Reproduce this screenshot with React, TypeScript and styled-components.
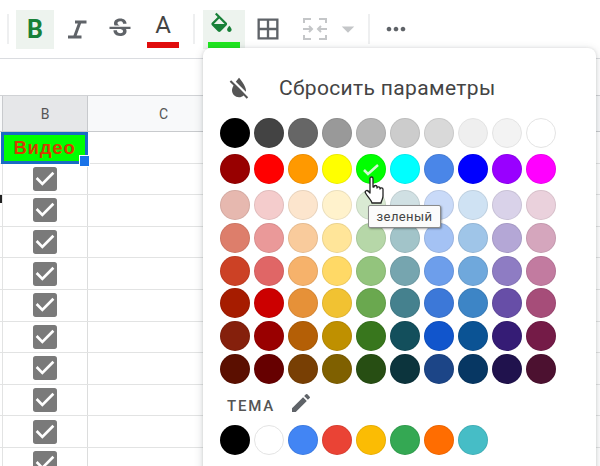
import React from "react";
import styled, { createGlobalStyle } from "styled-components";
import {
  MdStrikethroughS,
  MdBorderAll,
  MdFormatColorReset,
  MdEdit,
  MdCheckBox,
  MdMoreHoriz,
  MdArrowDropDown,
} from "react-icons/md";

const Global = createGlobalStyle`
  html, body { margin: 0; padding: 0; background: #fff; }
  body { font-family: Roboto, "Liberation Sans", sans-serif; }
`;

const Page = styled.div`
  position: relative;
  width: 600px;
  height: 466px;
  overflow: hidden;
  background: #fff;
`;

const Toolbar = styled.div`
  display: flex;
  align-items: center;
  height: 58px;
  padding-left: 7px;
  box-sizing: content-box;
  border-bottom: 1px solid #dadce0;
`;

const Separator = styled.div<{ $ml?: number }>`
  width: 2px;
  height: 30px;
  margin-left: ${(p) => p.$ml ?? 0}px;
  background: #eeeff0;
`;

const ToolButton = styled.div<{ $w?: number; $ml?: number; $active?: boolean; $color?: string }>`
  display: flex;
  align-items: center;
  justify-content: center;
  flex-direction: column;
  width: ${(p) => p.$w ?? 38}px;
  height: 39px;
  margin-left: ${(p) => p.$ml ?? 0}px;
  background: ${(p) => (p.$active ? "#edf3ee" : "transparent")};
  color: ${(p) => p.$color ?? "#5f6368"};
`;

const BoldLetter = styled.span`
  font: 700 25px Roboto, sans-serif;
  color: #188038;
`;

const ColorStack = styled.div`
  display: flex;
  flex-direction: column;
  align-items: center;
  justify-content: flex-end;
  height: 39px;
  padding-bottom: 1px;
  box-sizing: border-box;
`;

const ALetter = styled.span`
  font: 400 24px/28px Roboto, sans-serif;
  color: #444;
  margin-bottom: 3px;
`;

const ColorBar = styled.div<{ $color: string; $mt?: number }>`
  width: 32px;
  height: 6px;
  margin-top: ${(p) => p.$mt ?? 0}px;
  background: ${(p) => p.$color};
`;

const FillSvg = styled.svg`
  margin-left: -5px;
`;

const FormulaGap = styled.div`
  height: 36px;
  border-bottom: 1px solid #d0d2d5;
`;

const HeaderRow = styled.div`
  display: flex;
  height: 36px;
  border-bottom: 1px solid #c8cacd;
  box-sizing: border-box;
  background: #f8f9fa;
`;

const Gutter = styled.div`
  width: 2px;
  flex: none;
  border-right: 1px solid #c8cacd;
`;

const HeaderCell = styled.div<{ $w?: number; $selected?: boolean }>`
  display: flex;
  align-items: center;
  justify-content: center;
  width: ${(p) => p.$w ?? 152}px;
  flex: none;
  box-sizing: border-box;
  border-right: 1px solid #c8cacd;
  background: ${(p) => (p.$selected ? "#e6e7e9" : "#f8f9fa")};
  font: 400 14px Roboto, sans-serif;
  color: #555;
`;

const Row = styled.div`
  display: flex;
  height: 31.6px;
  box-sizing: border-box;
  border-bottom: 1px solid #e2e3e3;
`;

const CellB = styled.div`
  display: flex;
  align-items: center;
  justify-content: center;
  width: 86px;
  margin-left: 2px;
  flex: none;
  box-sizing: border-box;
  border-left: 1px solid #e2e3e3;
  border-right: 1px solid #dcdddd;
`;

const SelectedCell = styled.div`
  position: relative;
  display: flex;
  align-items: center;
  justify-content: center;
  width: 87px;
  height: 32px;
  margin-left: 1px;
  box-sizing: border-box;
  border: 3px solid #1a6cc4;
  background: #00ff00;
  font: 700 18.5px "Liberation Sans", sans-serif;
  letter-spacing: 0.8px;
  color: #d43c00;
`;

const FillHandle = styled.div`
  position: absolute;
  right: -5px;
  bottom: -6px;
  width: 11px;
  height: 12px;
  box-sizing: border-box;
  border: 1px solid #fff;
  background: #1a73e8;
`;

const EdgeMark = styled.div`
  position: absolute;
  left: 0;
  top: 195px;
  width: 2px;
  height: 8px;
  background: #222;
`;

const Menu = styled.div`
  position: absolute;
  left: 203px;
  top: 48px;
  width: 393px;
  height: 440px;
  padding: 22px 0 0 17px;
  box-sizing: border-box;
  background: #fff;
  border-radius: 8px;
  box-shadow: 0 2px 8px rgba(60, 64, 67, 0.22), 0 0 3px rgba(60, 64, 67, 0.12);
`;

const ResetRow = styled.div`
  display: flex;
  align-items: center;
  height: 36px;
  margin-bottom: 12px;
  padding-left: 5px;
  font: 400 21px Roboto, sans-serif;
  letter-spacing: 0.35px;
  color: #444;
`;

const ResetIcon = styled.div`
  display: flex;
  width: 54px;
  flex: none;
  color: #555;
`;

const Swatches = styled.div<{ $mb?: number }>`
  display: flex;
  gap: 4px;
  margin-bottom: ${(p) => p.$mb ?? 2.8}px;
`;

const Swatch = styled.div<{ $color: string }>`
  position: relative;
  width: 30px;
  height: 30px;
  flex: none;
  box-sizing: border-box;
  border-radius: 50%;
  background: ${(p) => p.$color};
  border: 1px solid ${(p) => (p.$color === "#ffffff" || p.$color === "#f3f3f3" || p.$color === "#efefef" ? "#e4e4e4" : "rgba(0,0,0,0.08)")};
`;

const SwatchCheck = styled.svg`
  position: absolute;
  left: 6px;
  top: 9px;
`;

const ThemeLabelRow = styled.div`
  display: flex;
  align-items: center;
  height: 38px;
  padding-left: 7px;
  gap: 14px;
  font: 500 15px Roboto, sans-serif;
  letter-spacing: 1.8px;
  color: #555;
`;

const PencilWrap = styled.span`
  display: flex;
  margin-top: -5px;
  color: #5f6368;
`;

const Tooltip = styled.div`
  position: absolute;
  left: 368px;
  top: 205px;
  width: 73px;
  height: 23px;
  display: flex;
  align-items: center;
  justify-content: center;
  box-sizing: border-box;
  background: #fbfbfb;
  border: 1px solid #8a8a8a;
  border-radius: 2px;
  box-shadow: 1px 1px 2px rgba(0, 0, 0, 0.35);
  font: 400 13px Roboto, sans-serif;
  letter-spacing: 0.4px;
  color: #444;
`;

const HandCursor = styled.svg`
  position: absolute;
  left: 364px;
  top: 176px;
`;

const STANDARD = [
  ["#000000", "#434343", "#666666", "#999999", "#b7b7b7", "#cccccc", "#d9d9d9", "#efefef", "#f3f3f3", "#ffffff"],
  ["#980000", "#ff0000", "#ff9900", "#ffff00", "#00ff00", "#00ffff", "#4a86e8", "#0000ff", "#9900ff", "#ff00ff"],
  ["#e6b8af", "#f4cccc", "#fce5cd", "#fff2cc", "#d9ead3", "#d0e0e3", "#c9daf8", "#cfe2f3", "#d9d2e9", "#ead1dc"],
  ["#dd7e6b", "#ea9999", "#f9cb9c", "#ffe599", "#b6d7a8", "#a2c4c9", "#a4c2f4", "#9fc5e8", "#b4a7d6", "#d5a6bd"],
  ["#cc4125", "#e06666", "#f6b26b", "#ffd966", "#93c47d", "#76a5af", "#6d9eeb", "#6fa8dc", "#8e7cc3", "#c27ba0"],
  ["#a61c00", "#cc0000", "#e69138", "#f1c232", "#6aa84f", "#45818e", "#3c78d8", "#3d85c6", "#674ea7", "#a64d79"],
  ["#85200c", "#990000", "#b45f06", "#bf9000", "#38761d", "#134f5c", "#1155cc", "#0b5394", "#351c75", "#741b47"],
  ["#5b0f00", "#660000", "#783f04", "#7f6000", "#274e13", "#0c343d", "#1c4587", "#073763", "#20124d", "#4c1130"],
];
const THEME = ["#000000", "#ffffff", "#4285f4", "#ea4335", "#fbbc04", "#34a853", "#ff6d01", "#46bdc6"];

const FillIcon = () => (
  <FillSvg width="27" height="24" viewBox="0 0 24 20" fill="#188038">
    <path d="M16.56 8.94L7.62 0 6.21 1.41l2.38 2.38-5.15 5.15c-.59.59-.59 1.54 0 2.12l5.5 5.5c.29.29.68.44 1.06.44s.77-.15 1.06-.44l5.5-5.5c.59-.58.59-1.53 0-2.12zM5.21 10L10 5.21 14.79 10H5.21zM19 11.5s-2 2.17-2 3.5c0 1.1.9 2 2 2s2-.9 2-2c0-1.33-2-3.5-2-3.5z" />
  </FillSvg>
);

const ItalicIcon = () => (
  <svg width="20" height="19" viewBox="0 0 20 19" fill="none" stroke="#5f6368" strokeWidth="3">
    <path d="M8 2h11.500M1 17h13.500M13 2L7.500 17" />
  </svg>
);

const MergeIcon = () => (
  <svg width="26" height="24" viewBox="0 0 26 24" fill="none" stroke="#c4c6c8" strokeWidth="2">
    <path d="M2 6V2h7M17 2h7v4M2 18v4h7M17 22h7v-4" />
    <path d="M1 12h9M7 9l3 3-3 3M25 12h-9M19 9l-3 3 3 3" />
  </svg>
);

export default function App() {
  return (
    <Page>
      <Global />
      <Toolbar>
        <Separator />
        <ToolButton $ml={7} $active>
          <BoldLetter>B</BoldLetter>
        </ToolButton>
        <ToolButton $ml={4}>
          <ItalicIcon />
        </ToolButton>
        <ToolButton $ml={5}>
          <MdStrikethroughS size={28} />
        </ToolButton>
        <ToolButton $ml={5}>
          <ColorStack>
            <ALetter>A</ALetter>
            <ColorBar $color="#e00d0d" />
          </ColorStack>
        </ToolButton>
        <Separator $ml={11} />
        <ToolButton $w={42} $ml={8} $active>
          <ColorStack>
            <FillIcon />
            <ColorBar $color="#1ee61e" $mt={6} />
          </ColorStack>
        </ToolButton>
        <ToolButton $ml={4}>
          <MdBorderAll size={28} />
        </ToolButton>
        <ToolButton $ml={9}>
          <MergeIcon />
        </ToolButton>
        <ToolButton $w={20} $ml={4} $color="#c4c6c8">
          <MdArrowDropDown size={30} />
        </ToolButton>
        <Separator $ml={10} />
        <ToolButton $ml={7}>
          <MdMoreHoriz size={28} />
        </ToolButton>
      </Toolbar>
      <FormulaGap />
      <HeaderRow>
        <Gutter />
        <HeaderCell $w={85} $selected>B</HeaderCell>
        <HeaderCell>C</HeaderCell>
      </HeaderRow>
      <Row>
        <SelectedCell>
          Видео
          <FillHandle />
        </SelectedCell>
      </Row>
      {Array.from({ length: 10 }, (_, i) => (
        <Row key={i}>
          <CellB>
            <MdCheckBox size={32} color="#7a7a7a" />
          </CellB>
        </Row>
      ))}
      <EdgeMark />
      <Menu>
        <ResetRow>
          <ResetIcon>
            <MdFormatColorReset size={28} />
          </ResetIcon>
          Сбросить параметры
        </ResetRow>
        {STANDARD.map((row, r) => (
          <Swatches key={r} $mb={r === 0 ? 6 : r === 1 ? 6 : undefined}>
            {row.map((c) => (
              <Swatch key={c} $color={c}>
                {c === "#00ff00" && (
                  <SwatchCheck width="18" height="12" viewBox="0 0 18 12" fill="none" stroke="#d2f8d2" strokeWidth="2.500">
                    <path d="M1 6l4 4 10-9" />
                  </SwatchCheck>
                )}
              </Swatch>
            ))}
          </Swatches>
        ))}
        <ThemeLabelRow>
          ТЕМА
          <PencilWrap>
            <MdEdit size={24} />
          </PencilWrap>
        </ThemeLabelRow>
        <Swatches>
          {THEME.map((c) => (
            <Swatch key={c} $color={c} />
          ))}
        </Swatches>
      </Menu>
      <HandCursor width="23" height="29" viewBox="0 0 23 29">
        <path
          d="M6 2.500c0-2 3-2 3 0V11l1 0c0-2 3-2 3 0v1c0-1.600 3-1.600 3 0v1c0-1.500 3-1.500 3 .2V20c0 3-1.500 4.500-2 7H8c-.5-2.500-5-7-6.500-10-1-2 1.500-3.500 3-1.500L6 17z"
          fill="#fff"
          stroke="#222"
          strokeWidth="1.300"
          strokeLinejoin="round"
        />
      </HandCursor>
      <Tooltip>зеленый</Tooltip>
    </Page>
  );
}
